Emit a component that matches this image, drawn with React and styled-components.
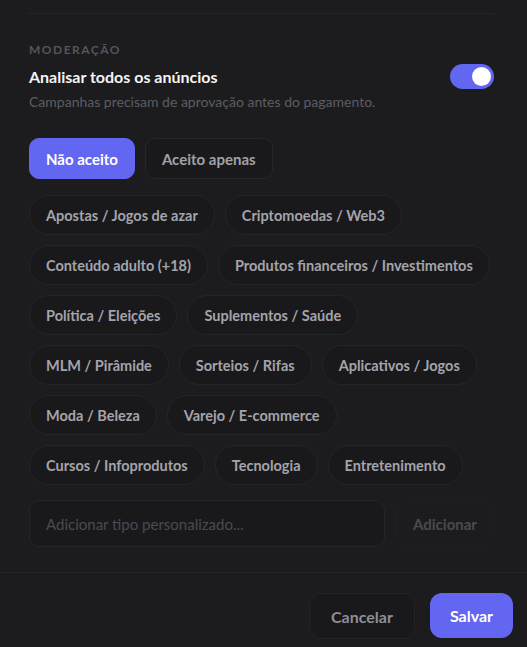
import styled, { createGlobalStyle } from "styled-components";

const GlobalStyle = createGlobalStyle`
  html, body {
    margin: 0;
    padding: 0;
    background: #1c1c1f;
  }
  body {
    font-family: "Lato", "Inter", sans-serif;
    -webkit-font-smoothing: antialiased;
  }
  * { box-sizing: border-box; }
`;

const categories = [
  "Apostas / Jogos de azar",
  "Criptomoedas / Web3",
  "Conteúdo adulto (+18)",
  "Produtos financeiros / Investimentos",
  "Política / Eleições",
  "Suplementos / Saúde",
  "MLM / Pirâmide",
  "Sorteios / Rifas",
  "Aplicativos / Jogos",
  "Moda / Beleza",
  "Varejo / E-commerce",
  "Cursos / Infoprodutos",
  "Tecnologia",
  "Entretenimento",
];

export default function App() {
  return (
    <>
      <GlobalStyle />
      <Modal>
        <Body>
          <Divider />
          <Section>
            <Label>MODERAÇÃO</Label>
            <SettingRow>
              <Title>Analisar todos os anúncios</Title>
              <Toggle aria-checked="true" role="switch">
                <Knob />
              </Toggle>
            </SettingRow>
            <Hint>Campanhas precisam de aprovação antes do pagamento.</Hint>
          </Section>

          <ModeRow>
            <ModeButton $active>Não aceito</ModeButton>
            <ModeButton>Aceito apenas</ModeButton>
          </ModeRow>

          <Chips>
            {categories.map((c) => (
              <Chip key={c}>{c}</Chip>
            ))}
          </Chips>

          <AddRow>
            <Input placeholder="Adicionar tipo personalizado..." />
            <AddButton>Adicionar</AddButton>
          </AddRow>
        </Body>
        <Footer>
          <Cancel>Cancelar</Cancel>
          <Save>Salvar</Save>
        </Footer>
      </Modal>
    </>
  );
}

const Modal = styled.div`
  width: 527px;
  height: 647px;
  background: #1c1c1f;
  display: flex;
  flex-direction: column;
  overflow: hidden;
`;

const Body = styled.div`
  padding: 13px 33px 0 29px;
  display: flex;
  flex-direction: column;
`;

const Divider = styled.div`
  height: 1px;
  background: #252528;
`;

const Section = styled.div`
  padding-top: 29px;
  display: flex;
  flex-direction: column;
`;

const Label = styled.div`
  font-size: 12px;
  font-weight: 700;
  letter-spacing: 1.5px;
  color: #55555b;
  line-height: 14px;
`;

const SettingRow = styled.div`
  display: flex;
  align-items: center;
  justify-content: space-between;
  margin-top: 7px;
`;

const Title = styled.div`
  font-size: 16px;
  font-weight: 700;
  color: #f4f4f5;
`;

const Toggle = styled.div`
  width: 44px;
  height: 25px;
  border-radius: 13px;
  background: #6366f1;
  display: flex;
  align-items: center;
  justify-content: flex-end;
  padding: 0 3px;
`;

const Knob = styled.div`
  width: 19px;
  height: 19px;
  border-radius: 50%;
  background: #ffffff;
`;

const Hint = styled.div`
  margin-top: 4px;
  font-size: 14px;
  color: #5c5c62;
`;

const ModeRow = styled.div`
  display: flex;
  gap: 10px;
  margin-top: 28px;
`;

const ModeButton = styled.button`
  height: 41px;
  padding: 0 16px;
  border-radius: 10px;
  font-family: inherit;
  font-size: 15px;
  font-weight: 700;
  border: 1px solid ${(p) => (p.$active ? "#6366f1" : "#27272b")};
  background: ${(p) => (p.$active ? "#6366f1" : "#19191c")};
  color: ${(p) => (p.$active ? "#ffffff" : "#a1a1a8")};
`;

const Chips = styled.div`
  display: flex;
  flex-wrap: wrap;
  gap: 10px 10px;
  margin-top: 16px;
`;

const Chip = styled.button`
  height: 40px;
  padding: 0 16px;
  border-radius: 20px;
  border: 1px solid #252529;
  background: #19191c;
  color: #a4a4ab;
  font-family: inherit;
  font-size: 14.5px;
  font-weight: 700;
  white-space: nowrap;
`;

const AddRow = styled.div`
  display: flex;
  gap: 11px;
  margin-top: 15px;
`;

const Input = styled.input`
  flex: 1;
  min-width: 0;
  height: 47px;
  border-radius: 10px;
  border: 1px solid #242428;
  background: #19191c;
  padding: 0 16px;
  font-family: inherit;
  font-size: 15px;
  color: #d4d4d8;
  outline: none;

  &::placeholder {
    color: #4a4a50;
  }
`;

const AddButton = styled.button`
  width: 98px;
  height: 47px;
  border-radius: 10px;
  border: 1px solid #1f1f23;
  background: #1c1c1f;
  color: #4a4a50;
  font-family: inherit;
  font-size: 15px;
  font-weight: 700;
`;

const Footer = styled.div`
  margin-top: 25px;
  border-top: 1px solid #252528;
  display: flex;
  justify-content: flex-end;
  gap: 15px;
  padding: 20px 14px 0 0;
`;

const Cancel = styled.button`
  height: 46px;
  padding: 0 21px;
  border-radius: 12px;
  border: 1px solid #242428;
  background: #19191c;
  color: #8e8e95;
  font-family: inherit;
  font-size: 16px;
  font-weight: 700;
`;

const Save = styled.button`
  height: 45px;
  padding: 0 20px;
  border-radius: 12px;
  border: none;
  background: #6366f1;
  color: #ffffff;
  font-family: inherit;
  font-size: 16px;
  font-weight: 700;
`;
